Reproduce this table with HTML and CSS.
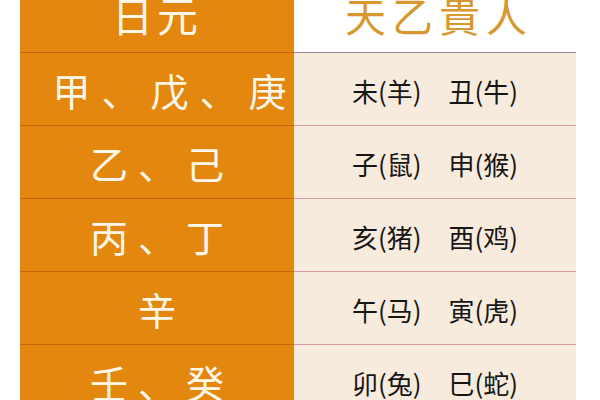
FILE: index.html
```html
<!DOCTYPE html>
<html lang="zh">
<head>
<meta charset="utf-8">
<link rel="stylesheet" href="styles.css">
</head>
<body>
<div class="table">
  <div class="cell left head">日元</div>
  <div class="cell right head">天乙貴人</div>

  <div class="cell left wide">甲、戊、庚</div>
  <div class="cell right"><span>未(羊)</span><span>丑(牛)</span></div>

  <div class="cell left">乙、己</div>
  <div class="cell right"><span>子(鼠)</span><span>申(猴)</span></div>

  <div class="cell left">丙、丁</div>
  <div class="cell right"><span>亥(猪)</span><span>酉(鸡)</span></div>

  <div class="cell left">辛</div>
  <div class="cell right"><span>午(马)</span><span>寅(虎)</span></div>

  <div class="cell left">壬、癸</div>
  <div class="cell right"><span>卯(兔)</span><span>巳(蛇)</span></div>
</div>
</body>
</html>
```

FILE: styles.css
```css
html, body {
  margin: 0;
  padding: 0;
  background: #ffffff;
  overflow: hidden;
}

body {
  width: 600px;
  height: 400px;
  font-family: "Noto Sans CJK SC", "Noto Sans", sans-serif;
}

.table {
  display: grid;
  grid-template-columns: 274px 282px;
  grid-auto-rows: 73px;
  margin: -20px 0 0 20px;
}

.cell {
  display: flex;
  align-items: center;
  justify-content: center;
  box-sizing: border-box;
  border-bottom: 1.5px solid transparent;
  white-space: nowrap;
}

.left {
  background: #e3870f;
  color: #fff8ea;
  font-size: 38px;
  letter-spacing: 10px;
  padding-left: 10px;
  border-bottom-color: #c9620c;
}

.left.wide {
  padding-left: 36px;
  letter-spacing: 11px;
}

.right {
  background: #f6ebdc;
  color: #161616;
  font-size: 26px;
  gap: 27px;
  padding-top: 2px;
  border-bottom-color: #d59aa6;
}

.left.head {
  font-size: 41px;
  letter-spacing: 4px;
  padding-left: 0;
  padding-bottom: 4px;
}

.right.head {
  background: #ffffff;
  color: #d6982f;
  font-size: 41px;
  letter-spacing: 6px;
  padding-left: 8px;
  padding-top: 0;
  padding-bottom: 4px;
  border-bottom-color: #a08494;
}
```
